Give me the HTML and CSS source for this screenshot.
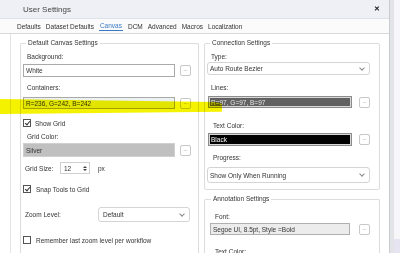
FILE: index.html
```html
<!DOCTYPE html>
<html lang="en">
<head>
  <meta charset="UTF-8" />
  <title>User Settings</title>
  <link rel="stylesheet" href="styles.css">
</head>
<body>
  <div class="page">
    <div class="dialog">
      <div class="titlebar">
        <span class="title">User Settings</span>
        <span class="close">&#x2715;</span>
      </div>
      <div class="tabs">
        <span class="tab">Defaults</span>
        <span class="tab">Dataset Defaults</span>
        <span class="tab active">Canvas</span>
        <span class="tab">DCM</span>
        <span class="tab">Advanced</span>
        <span class="tab">Macros</span>
        <span class="tab">Localization</span>
      </div>
      <div class="content">
        <fieldset class="group left">
          <legend>Default Canvas Settings</legend>
          <div class="lbl l-bg">Background:</div>
          <div class="row r-bg">
            <div class="field white">White</div>
            <span class="dots">...</span>
          </div>
          <div class="lbl l-cont">Containers:</div>
          <div class="row r-cont">
            <div class="field cont">R=236, G=242, B=242</div>
            <span class="dots">...</span>
          </div>
          <label class="check c-grid"><span class="box checked"></span>Show Grid</label>
          <div class="lbl l-gcol">Grid Color:</div>
          <div class="row r-gcol">
            <div class="field silver">Silver</div>
            <span class="dots">...</span>
          </div>
          <div class="size-row">
            <span class="size-lbl">Grid Size:</span>
            <div class="spin">12<span class="arrows"><i class="up"></i><i class="down"></i></span></div>
            <span class="unit">px</span>
          </div>
          <label class="check c-snap"><span class="box checked"></span>Snap Tools to Grid</label>
          <div class="zoom-row">
            <span class="size-lbl">Zoom Level:</span>
            <div class="select zoom-sel">Default<span class="chev"></span></div>
          </div>
          <label class="check c-rem"><span class="box"></span>Remember last zoom level per workflow</label>
        </fieldset>

        <div class="col">
          <fieldset class="group conn">
            <legend>Connection Settings</legend>
            <div class="lbl l-type">Type:</div>
            <div class="select type-sel">Auto Route Bezier<span class="chev"></span></div>
            <div class="lbl l-lines">Lines:</div>
            <div class="row r-lines">
              <div class="field dark">R=97, G=97, B=97</div>
              <span class="dots">...</span>
            </div>
            <div class="lbl l-tcol">Text Color:</div>
            <div class="row r-tcol">
              <div class="field black">Black</div>
              <span class="dots">...</span>
            </div>
            <div class="lbl l-prog">Progress:</div>
            <div class="select prog-sel">Show Only When Running<span class="chev"></span></div>
          </fieldset>
          <fieldset class="group anno">
            <legend>Annotation Settings</legend>
            <div class="lbl l-font">Font:</div>
            <div class="row r-font">
              <div class="field font">Segoe UI, 8.5pt, Style =Bold</div>
              <span class="dots">...</span>
            </div>
            <div class="lbl l-acol">Text Color:</div>
          </fieldset>
        </div>
      </div>
    </div>
    <div class="outside">
      <div class="strip"></div>
      <div class="canvas-bg"><div class="band"></div></div>
    </div>
  </div>
  <div class="marker"></div>
</body>
</html>
```

FILE: styles.css
```css
body {
  margin: 0;
  width: 400px;
  height: 253px;
  overflow: hidden;
  font-family: "Liberation Sans", Arial, sans-serif;
  font-size: 6.5px;
  color: #333;
  background: #fff;
}
.page {
  display: flex;
  height: 253px;
}
.dialog {
  width: 389px;
  flex-shrink: 0;
  border-right: 1px solid #c9cbd0;
  background: #fff;
  display: flex;
  flex-direction: column;
  overflow: hidden;
}
.titlebar {
  height: 19px;
  flex-shrink: 0;
  background: #eef0f5;
  border-bottom: 1px solid #dfe1e6;
  display: flex;
  align-items: center;
  justify-content: space-between;
  padding: 0 9px 0 23px;
  box-sizing: border-box;
}
.title {
  font-size: 8px;
  color: #444;
}
.close {
  font-size: 7px;
  font-weight: bold;
  color: #222;
}
.tabs {
  height: 14px;
  flex-shrink: 0;
  display: flex;
  align-items: center;
  gap: 5px;
  padding-left: 17px;
  background: #fbfbfb;
  border-bottom: 1px solid #d8d8d8;
}
.tab {
  color: #333;
}
.tab.active {
  color: #3c7bc4;
  border-bottom: 1px solid #3c7bc4;
  line-height: 8px;
  padding: 0 1px;
}
.content {
  flex: 1;
  display: flex;
  gap: 5px;
  margin-left: 10px;
  padding-left: 9px;
  border-left: 1px solid #e4e4e4;
}
.group {
  margin: 0;
  padding: 0 0 0 2px;
  border: 1px solid #dcdcdc;
  border-radius: 2px;
  min-width: 0;
}
.group legend {
  line-height: 10px;
  padding: 0 2px;
  margin-left: 3px;
  color: #333;
}
.left {
  width: 179px;
  flex-shrink: 0;
  box-sizing: border-box;
  padding-right: 7px;
  margin-top: 4px;
  border-bottom: none;
}
.col {
  width: 176px;
  flex-shrink: 0;
  display: flex;
  flex-direction: column;
}
.conn {
  margin-top: 4px;
  padding-right: 9px;
  padding-bottom: 6px;
  flex-shrink: 0;
}
.anno {
  margin-top: 4px;
  padding-right: 9px;
  padding-left: 3px;
  border-bottom: none;
  flex-shrink: 0;
}
.lbl {
  line-height: 10px;
  padding-left: 4px;
}
.row {
  display: flex;
  align-items: center;
  gap: 5px;
}
.field {
  flex: 1;
  box-sizing: border-box;
  border: 1px solid #a9a9a9;
  padding-left: 2px;
  display: flex;
  align-items: center;
  white-space: nowrap;
  overflow: hidden;
}
.dots {
  width: 11px;
  height: 11px;
  box-sizing: border-box;
  border: 1px solid #c8c8c8;
  border-radius: 2px;
  background: #fff;
  font-size: 5px;
  line-height: 7px;
  text-align: center;
  color: #666;
}
.white { background: #fff; height: 13px; }
.cont { background: #ecf2f2; height: 12px; }
.silver { background: #c0c0c0; height: 14px; border-color: #d0d0d0; }
.dark {
  background: #616161;
  color: #e6e6e6;
  height: 12px;
  border: 1px solid #8c8c8c;
  box-shadow: inset 0 0 0 1px #d8d8d8;
}
.black {
  background: #000;
  color: #fff;
  height: 13px;
  border: 1px solid #8c8c8c;
  box-shadow: inset 0 0 0 1px #d8d8d8;
}
.font { background: #ececec; height: 12px; border-color: #b0b0b0; }
.r-lines, .r-tcol { padding-left: 1px; gap: 7px; }
.r-font { padding-left: 2px; gap: 9px; }

.l-bg { margin-top: 4px; }
.r-bg { margin-top: 2px; }
.l-cont { margin-top: 6px; }
.r-cont { margin-top: 4px; }
.c-grid { margin-top: 9px; }
.l-gcol { margin-top: 4px; }
.r-gcol { margin-top: 1px; }
.c-snap { margin-top: 10px; }
.c-rem { margin-top: 13px; }

.check {
  display: flex;
  align-items: center;
  height: 10px;
  gap: 4px;
}
.box {
  width: 8px;
  height: 8px;
  box-sizing: border-box;
  border: 1px solid #555;
  background: #fff;
  position: relative;
}
.box.checked::after {
  content: "";
  position: absolute;
  left: 1.5px;
  top: 0;
  width: 2px;
  height: 4px;
  border: solid #333;
  border-width: 0 1px 1px 0;
  transform: rotate(40deg);
}
.c-snap, .c-rem { gap: 5px; }

.size-row {
  display: flex;
  align-items: center;
  margin-top: 5px;
  height: 12px;
  padding-left: 2px;
}
.size-lbl {
  width: 35px;
}
.spin {
  width: 30px;
  height: 12px;
  box-sizing: border-box;
  border: 1px solid #d0d0d0;
  display: flex;
  align-items: center;
  justify-content: space-between;
  padding: 0 1px 0 3px;
  color: #333;
}
.arrows {
  display: flex;
  flex-direction: column;
  gap: 1px;
  padding-right: 1px;
}
.arrows i {
  width: 0;
  height: 0;
  border-left: 2px solid transparent;
  border-right: 2px solid transparent;
}
.arrows .up { border-bottom: 2px solid #444; }
.arrows .down { border-top: 2px solid #444; }
.unit { margin-left: 8px; }

.zoom-row {
  display: flex;
  align-items: center;
  margin-top: 13px;
  padding-left: 2px;
}
.zoom-row .size-lbl { width: 73px; }
.select {
  box-sizing: border-box;
  border: 1px solid #d4d4d4;
  border-radius: 3px;
  background: #fff;
  display: flex;
  align-items: center;
  justify-content: space-between;
  padding: 0 5px 0 2px;
  position: relative;
}
.zoom-sel { width: 92px; height: 15px; padding-left: 4px; }
.type-sel { height: 13px; }
.prog-sel { height: 16px; margin-top: 4px; }
.chev {
  width: 3px;
  height: 3px;
  border: solid #888;
  border-width: 0 1px 1px 0;
  transform: rotate(45deg);
  margin-top: -2px;
}
.l-type { margin-top: 4px; }
.l-lines { margin-top: 8px; }
.r-lines { margin-top: 3px; }
.l-tcol { margin-top: 13px; padding-left: 6px; }
.r-tcol { margin-top: 2px; }
.l-prog { margin-top: 7px; padding-left: 6px; }
.l-font { margin-top: 8px; padding-left: 7px; }
.r-font { margin-top: 1px; }
.l-acol { margin-top: 12px; padding-left: 7px; }

.outside {
  flex: 1;
  display: flex;
}
.strip {
  width: 4px;
  background: #e3e4e8;
}
.canvas-bg {
  flex: 1;
  background-color: #f7f7f9;
  background-image: radial-gradient(#d8dae0 0.6px, transparent 0.7px);
  background-size: 6px 6px;
  display: flex;
  flex-direction: column;
  justify-content: flex-end;
}
.band {
  height: 14px;
  background: #e6e4f0;
}
.marker {
  position: absolute;
  left: 0;
  top: 99px;
  width: 222px;
  height: 15px;
  background: #f5f200;
  mix-blend-mode: multiply;
  clip-path: polygon(0 0, 97% 20%, 100% 30%, 100% 85%, 0 100%);
}
```
